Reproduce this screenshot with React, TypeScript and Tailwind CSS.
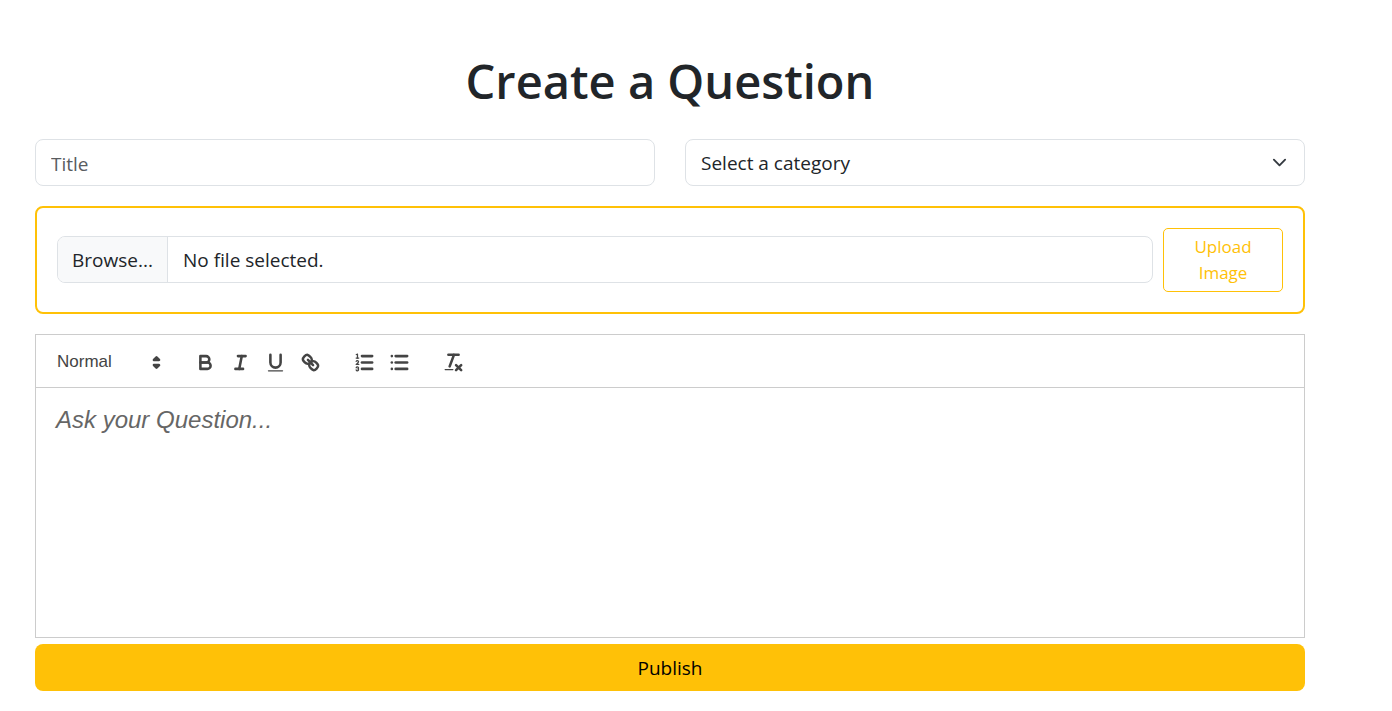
import { useState } from "react";
import type { ReactNode } from "react";

function Icon({ children }: { children: ReactNode }) {
  return (
    <svg
      viewBox="0 0 18 18"
      className="h-[23px] w-[23px]"
      fill="none"
      stroke="#444"
      strokeWidth="2"
      strokeLinecap="round"
      strokeLinejoin="round"
      aria-hidden="true"
    >
      {children}
    </svg>
  );
}

function ToolButton({ label, children }: { label: string; children: ReactNode }) {
  return (
    <button type="button" aria-label={label} className="flex h-8 w-[35px] items-center justify-center">
      <Icon>{children}</Icon>
    </button>
  );
}

function Toolbar() {
  return (
    <div className="flex flex-wrap items-center gap-[19px] border border-[#ccc] px-[10px] pt-[11px] pb-[9px] font-['Liberation_Sans',Arial,sans-serif]">
      <div className="grid w-[123px] items-center">
        <select
          aria-label="Text style"
          className="col-start-1 row-start-1 h-8 w-full appearance-none bg-transparent pl-[11px] text-[17px] text-[#444] outline-none"
        >
          <option>Normal</option>
          <option>Heading 1</option>
          <option>Heading 2</option>
        </select>
        <span className="pointer-events-none col-start-1 row-start-1 mr-px justify-self-end">
          <Icon>
            <polygon points="7 11 9 13 11 11 7 11" />
            <polygon points="7 7 9 5 11 7 7 7" />
          </Icon>
        </span>
      </div>
      <div className="flex">
        <ToolButton label="Bold">
          <path d="M5,4H9.5A2.5,2.5,0,0,1,12,6.5v0A2.5,2.5,0,0,1,9.5,9H5V4Z" />
          <path d="M5,9h5.5A2.5,2.5,0,0,1,13,11.5v0A2.5,2.5,0,0,1,10.5,14H5V9Z" />
        </ToolButton>
        <ToolButton label="Italic">
          <line x1="7" x2="13" y1="4" y2="4" />
          <line x1="5" x2="11" y1="14" y2="14" />
          <line x1="8" x2="10" y1="14" y2="4" />
        </ToolButton>
        <ToolButton label="Underline">
          <path d="M5,3V9a4.012,4.012,0,0,0,4,4H9a4.012,4.012,0,0,0,4-4V3" />
          <rect x="3" y="15" width="12" height="1" rx="0.5" fill="#444" stroke="none" />
        </ToolButton>
        <ToolButton label="Link">
          <line x1="7" x2="11" y1="7" y2="11" />
          <path d="M8.9,4.577a3.476,3.476,0,0,1,.36,4.679A3.476,3.476,0,0,1,4.577,8.9C3.185,7.5,2.035,6.4,4.217,4.217S7.5,3.185,8.9,4.577Z" />
          <path d="M13.423,9.1a3.476,3.476,0,0,0-4.679-.36,3.476,3.476,0,0,0,.36,4.679c1.392,1.392,2.5,2.542,4.679.36S14.815,10.5,13.423,9.1Z" />
        </ToolButton>
      </div>
      <div className="flex">
        <ToolButton label="Numbered list">
          <line x1="7" x2="15" y1="4" y2="4" />
          <line x1="7" x2="15" y1="9" y2="9" />
          <line x1="7" x2="15" y1="14" y2="14" />
          <line x1="2.5" x2="4.5" y1="5.5" y2="5.5" strokeWidth="1" />
          <path
            fill="#444"
            stroke="none"
            d="M3.5,6A0.5,0.5,0,0,1,3,5.5V3.085l-0.276.138A0.5,0.5,0,0,1,2.053,3c-0.124-.247-0.023-0.324.224-0.447l1-.5A0.5,0.5,0,0,1,4,2.5v3A0.5,0.5,0,0,1,3.5,6Z"
          />
          <path strokeWidth="1" d="M4.5,10.5h-2c0-.234,1.85-1.076,1.85-2.234A0.959,0.959,0,0,0,2.5,8.156" />
          <path
            strokeWidth="1"
            d="M2.5,14.846a0.959,0.959,0,0,0,1.85-.109A0.7,0.7,0,0,0,3.75,14a0.688,0.688,0,0,0,.6-0.736,0.959,0.959,0,0,0-1.85-.109"
          />
        </ToolButton>
        <ToolButton label="Bulleted list">
          <line x1="6" x2="15" y1="4" y2="4" />
          <line x1="6" x2="15" y1="9" y2="9" />
          <line x1="6" x2="15" y1="14" y2="14" />
          <line x1="3" x2="3" y1="4" y2="4" />
          <line x1="3" x2="3" y1="9" y2="9" />
          <line x1="3" x2="3" y1="14" y2="14" />
        </ToolButton>
      </div>
      <ToolButton label="Clear formatting">
        <line x1="5" x2="13" y1="3" y2="3" />
        <line x1="6" x2="9.35" y1="12" y2="3" />
        <line x1="11" x2="15" y1="11" y2="15" />
        <line x1="15" x2="11" y1="11" y2="15" />
        <rect x="2" y="14" width="7" height="1" rx="0.5" fill="#444" stroke="none" />
      </ToolButton>
    </div>
  );
}

export default function App() {
  const [fileName, setFileName] = useState("No file selected.");

  return (
    <main className="bg-white pt-[51px] pr-[87px] pb-5 pl-[35px] font-['Open_Sans','Noto_Sans',sans-serif] text-[19px] text-[#212529]">
      <h1 className="mb-7 text-center text-[47px] leading-[60px] font-semibold">Create a Question</h1>
      <form onSubmit={(e) => e.preventDefault()}>
        <div className="mb-5 grid grid-cols-2 gap-[30px]">
          <input
            type="text"
            aria-label="Title"
            placeholder="Title"
            className="h-[47px] w-full rounded-lg border border-[#dee2e6] px-[15px] pt-0.5 outline-none placeholder:text-[#595c5f]"
          />
          <div className="grid items-center">
            <select
              aria-label="Category"
              className="col-start-1 row-start-1 h-[47px] w-full appearance-none rounded-lg border border-[#dee2e6] bg-white px-[15px] pt-0.5 outline-none"
            >
              <option>Select a category</option>
            </select>
            <svg
              viewBox="0 0 16 16"
              className="pointer-events-none col-start-1 row-start-1 mr-[18px] h-[15px] w-[15px] justify-self-end"
              fill="none"
              stroke="#343a40"
              strokeWidth="2"
              strokeLinecap="round"
              strokeLinejoin="round"
              aria-hidden="true"
            >
              <path d="m2 5 6 6 6-6" />
            </svg>
          </div>
        </div>

        <div className="mb-5 flex items-center gap-[10px] rounded-lg border-2 border-[#ffc107] p-5">
          <label className="relative mb-px flex h-[47px] grow cursor-pointer items-stretch overflow-hidden rounded-lg border border-[#dee2e6]">
            <input
              type="file"
              className="sr-only"
              onChange={(e) => setFileName(e.target.files?.[0]?.name ?? "No file selected.")}
            />
            <span className="flex w-[110px] items-center justify-center border-r border-[#dee2e6] bg-[#f8f9fa] pt-0.5">
              Browse...
            </span>
            <span className="flex items-center px-[15px] pt-0.5">{fileName}</span>
          </label>
          <button
            type="button"
            className="w-[120px] rounded-[5px] border border-[#ffc107] px-5 py-[5px] text-[17px] leading-[26px] text-[#ffc107]"
          >
            Upload Image
          </button>
        </div>

        <Toolbar />
        <textarea
          aria-label="Question"
          placeholder="Ask your Question..."
          className="mb-[6px] block h-[250px] w-full resize-none border border-t-0 border-[#ccc] px-5 py-[15px] font-['Liberation_Sans',Arial,sans-serif] text-[24px] leading-[34px] outline-none placeholder:text-[#666] placeholder:italic"
        />
        <button type="submit" className="h-[47px] w-full rounded-lg bg-[#ffc107] pt-0.5 text-black">
          Publish
        </button>
      </form>
    </main>
  );
}
